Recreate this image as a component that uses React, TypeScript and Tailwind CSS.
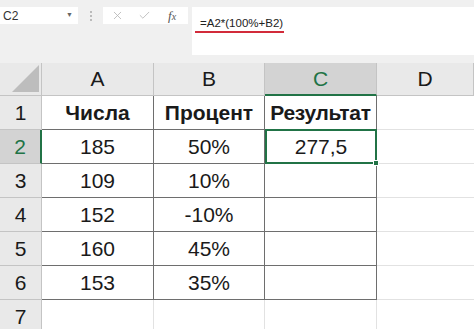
import { Check, X } from "lucide-react";

const ROWS = [
  { n: 1, a: "Числа", b: "Процент", c: "Результат", bold: true },
  { n: 2, a: "185", b: "50%", c: "277,5" },
  { n: 3, a: "109", b: "10%", c: "" },
  { n: 4, a: "152", b: "-10%", c: "" },
  { n: 5, a: "160", b: "45%", c: "" },
  { n: 6, a: "153", b: "35%", c: "" },
  { n: 7, a: "", b: "", c: "" },
];

const COLS = ["A", "B", "C", "D"];

export default function App() {
  return (
    <div className="w-[474px] h-[329px] overflow-hidden bg-[#f0f0f0] font-['Liberation_Sans',Arial,sans-serif] text-[#1a1a1a]">
      {/* Formula bar */}
      <div className="flex items-start h-[63px] pt-[7px]">
        <div className="flex items-center justify-between w-[78px] h-[17px] bg-white pl-[3px] pr-[5px] text-[12px] text-[#333]">
          <span>C2</span>
          <span className="text-[7px] text-[#666]">▼</span>
        </div>
        <div className="flex flex-col items-center justify-center gap-[2px] w-[25px] h-[17px]">
          <span className="w-[2px] h-[2px] bg-[#bbb]" />
          <span className="w-[2px] h-[2px] bg-[#bbb]" />
          <span className="w-[2px] h-[2px] bg-[#bbb]" />
        </div>
        <div className="flex items-center w-[85px] h-[17px] bg-white">
          <X className="ml-[8px] w-[13px] h-[13px] text-[#b4b4b4]" strokeWidth={1.5} />
          <Check className="ml-[14px] w-[13px] h-[13px] text-[#b4b4b4]" strokeWidth={1.5} />
          <span className="ml-[17px] font-['Liberation_Serif',serif] italic text-[13px] text-[#555]">
            f<span className="text-[10px]">x</span>
          </span>
        </div>
        <div className="ml-[4px] flex-1 h-[48px] bg-white pl-[8px] pt-[3px]">
          <div className="inline-block text-[11.5px] text-[#222] leading-[14px] border-b-[2px] border-[#d22b3a] pr-[1px] -ml-[5px] pl-[5px] pb-[1px]">
            =A2*(100%+B2)
          </div>
        </div>
      </div>

      {/* Sheet grid */}
      <div className="grid grid-cols-[42px_112px_111px_112px_1fr] grid-rows-[33px_34px_34px_34px_34px_34px_34px_34px]">
        {/* corner */}
        <div className="relative bg-[#e9e9e9] border-r border-b border-[#c4c4c4]">
          <div className="absolute right-[2px] bottom-[3px] w-0 h-0 border-l-[27px] border-l-transparent border-b-[27px] border-b-[#bdbdbd]" />
        </div>
        {COLS.map((c) => (
          <div
            key={c}
            className={
              c === "C"
                ? "flex items-center justify-center bg-[#d3d3d3] border-r border-[#c4c4c4] border-b-2 border-b-[#217346] text-[21px] text-[#217346]"
                : "flex items-center justify-center bg-[#e9e9e9] border-r border-b border-[#c4c4c4] text-[21px] text-[#1a1a1a]"
            }
          >
            {c}
          </div>
        ))}

        {ROWS.map((r) => (
          <Row key={r.n} r={r} />
        ))}
      </div>
    </div>
  );
}

function Row({ r }: { r: (typeof ROWS)[number] }) {
  const inTable = r.n <= 6;
  const sel = r.n === 2;
  const cellBase = "flex items-center justify-center bg-white text-[21px] border-r border-b";
  const dark = inTable ? "border-[#6e6e6e]" : "border-[#e2e2e2]";
  return (
    <>
      <div
        className={
          sel
            ? "flex items-center justify-center bg-[#d3d3d3] border-b border-[#c4c4c4] border-r-2 border-r-[#217346] text-[21px] text-[#217346]"
            : "flex items-center justify-center bg-[#e9e9e9] border-r border-b border-[#c4c4c4] text-[21px] text-[#1a1a1a]"
        }
      >
        {r.n}
      </div>
      <div className={`${cellBase} ${dark} ${r.bold ? "font-bold" : ""}`}>{r.a}</div>
      <div className={`${cellBase} ${dark} ${r.bold ? "font-bold" : ""}`}>{r.b}</div>
      <div
        className={
          sel
            ? "relative flex items-center justify-center bg-white text-[21px] border-2 border-[#217346] -mt-px"
            : `${cellBase} ${dark} ${r.bold ? "font-bold tracking-[-0.3px]" : ""}`
        }
      >
        {r.c}
        {sel && (
          <span className="absolute -right-[4px] -bottom-[4px] w-[6px] h-[6px] bg-[#217346] border border-white" />
        )}
      </div>
      <div className="bg-white border-b border-[#e2e2e2]" />
    </>
  );
}
